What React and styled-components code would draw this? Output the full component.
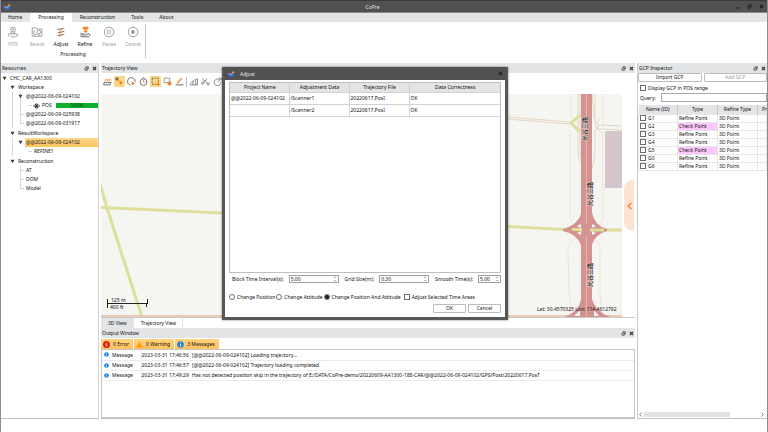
import React, { useState } from "react";
import styled, { createGlobalStyle, css } from "styled-components";

const GlobalStyle = createGlobalStyle`
  * {
    box-sizing: border-box;
  }
  body {
    margin: 0;
    background: #fff;
  }
  body, button, input, table {
    font-family: "Noto Sans", "Open Sans", "Noto Sans CJK SC", sans-serif;
    font-size: 5px;
    line-height: 8px;
    color: #111;
  }
`;

const Window = styled.div`
  position: relative;
  display: flex;
  flex-direction: column;
  min-height: 100vh;
  border: 1px solid #8c8c8c;
  border-top: 0;
  overflow: hidden;
`;
const TitleBar = styled.header`
  display: flex;
  align-items: center;
  height: 13px;
  padding: 0 3px 0 2px;
  background: #515151;
  border-top: 1px solid #3a3a3a;
  border-bottom: 1px solid #8a8a8a;
  color: #e4e4e4;
`;
const AppTitle = styled.h1`
  flex: 1;
  margin: 0;
  font-size: 5px;
  font-weight: 400;
  text-align: center;
`;
const WindowButtons = styled.div`
  display: flex;
  justify-content: flex-end;
  gap: 6px;
`;
const IconButton = styled.button`
  display: flex;
  align-items: center;
  justify-content: center;
  width: 6px;
  height: 8px;
  padding: 0;
  border: 0;
  background: none;
  color: ${(props) => props.$color || "#333"};
`;
const MenuTabs = styled.nav`
  display: flex;
  height: 9px;
  background: #e3e4e6;
`;
const MenuTab = styled.button`
  padding: 0 8px;
  border: 0;
  background: ${(props) => (props.$active ? "#fff" : "none")};
  line-height: 9px;
  &:first-child {
    padding-left: 7px;
  }
`;
const Ribbon = styled.div`
  display: flex;
  height: 41px;
  padding-top: 2px;
`;
const RibbonGroup = styled.section`
  height: 34px;
  border-right: 1px solid #c4c4c4;
`;
const RibbonItems = styled.div`
  display: flex;
`;
const RibbonButton = styled.button`
  display: flex;
  flex-direction: column;
  align-items: center;
  width: 24px;
  height: 26px;
  padding: 2px 0 0;
  border: 0;
  background: none;
  color: ${(props) => (props.disabled ? "#a0a0a0" : "#111")};
  svg {
    margin-bottom: 2px;
  }
`;
const GroupName = styled.div`
  text-align: center;
`;

const Workspace = styled.main`
  display: grid;
  grid-template-columns: 98px 1fr 130px;
  gap: 2px;
  flex: 1;
`;
const Panel = styled.section`
  display: flex;
  flex-direction: column;
  min-width: 0;
  border-bottom: 1px solid #c2c3c5;
  ${(props) =>
    props.$side === "left" &&
    css`
      border-right: 1px solid #cfd0d2;
    `}
  ${(props) =>
    props.$side === "right" &&
    css`
      border-left: 1px solid #c8c9cb;
    `}
`;
const PanelHeader = styled.div`
  display: flex;
  align-items: center;
  gap: 2px;
  flex: none;
  height: 10px;
  padding: 0 1px;
  background: #e3e4e6;
`;
const PanelTitle = styled.h2`
  flex: 1;
  margin: 0;
  font-size: 5px;
  font-weight: 400;
`;

const guide = "linear-gradient(#d8d8d8, #d8d8d8) no-repeat";
const Tree = styled.ul`
  margin: 0;
  padding: 0 0 0 8px;
  list-style: none;
  ${(props) =>
    props.$root &&
    css`
      padding: 1px 0 0 1px;
    `}
  ${(props) =>
    props.$groups &&
    css`
      display: flex;
      flex-direction: column;
      gap: 1px;
    `}
  ${(props) =>
    props.$guides === "outer" &&
    css`
      background: ${guide} 2px 0 / 1px 100%;
    `}
  ${(props) =>
    props.$guides === "inner" &&
    css`
      background: ${guide} 10px 0 / 1px calc(100% - 4px);
    `}
  ${(props) =>
    props.$guides === "both" &&
    css`
      background: ${guide} 2px 0 / 1px 100%,
        ${guide} 10px 0 / 1px calc(100% - 4px);
    `}
`;
const TreeRow = styled.div`
  display: flex;
  align-items: center;
  height: 9px;
  line-height: 9px;
  white-space: nowrap;
  > svg:first-child {
    margin-right: 2px;
  }
`;
const TreeLabel = styled.span`
  flex: 1;
  padding-left: 1px;
  background: ${(props) =>
    props.$selected ? "linear-gradient(#ffd98a, #fdc35f)" : "none"};
`;
const Branch = styled.span`
  width: 4px;
  height: 1px;
  margin: 0 1px 0 2px;
  background: #d4d4d4;
`;
const NodeName = styled.span`
  padding: 0 4px 0 2px;
`;
const Progress = styled.span`
  flex: 1;
  height: 5px;
  background: #0fae2b;
  color: #083d12;
  line-height: 5px;
  text-align: center;
`;

const ViewTools = styled.div`
  display: flex;
  align-items: center;
  gap: 1px;
  height: 21px;
  padding: 0 0 4px 1px;
  overflow: hidden;
`;
const ToolButton = styled.button`
  display: flex;
  align-items: center;
  justify-content: center;
  flex: none;
  width: 11px;
  height: 11px;
  padding: 0;
  border: 0;
  border-radius: 1px;
  background: ${(props) => (props.$active ? "#fed685" : "none")};
`;
const ToolDivider = styled.span`
  width: 1px;
  height: 10px;
  background: #bbb;
`;
const MapArea = styled.div`
  position: relative;
  display: flex;
  flex: 1;
  min-height: 200px;
  padding-right: 13px;
  border-bottom: 1px solid #c9c9c9;
`;
const MapCanvas = styled.svg`
  flex: 1;
  width: 0;
  min-width: 0;
  background: #f5f5f1;
`;
const DrawerHandle = styled.button`
  position: absolute;
  right: 1px;
  top: 86px;
  display: flex;
  align-items: center;
  justify-content: center;
  width: 10px;
  height: 51px;
  padding: 0;
  border: 0;
  border-radius: 9px 0 0 9px;
  background: #fde3d1;
`;
const ViewTabs = styled.div`
  display: flex;
  height: 10px;
`;
const ViewTab = styled.button`
  padding: 0 6px 0 7px;
  border: 0;
  border-right: 1px solid #e3e4e6;
  background: ${(props) => (props.$active ? "#fff" : "#e3e4e6")};
`;
const Filters = styled.div`
  display: flex;
  gap: 1px;
  padding-top: 1px;
`;
const FilterButton = styled.button`
  display: flex;
  align-items: center;
  gap: 3px;
  height: 10px;
  padding: 0 4px 0 2px;
  border: 0;
  background: linear-gradient(#ffd27c, #fec260);
`;
const LogBox = styled.div`
  height: 69px;
  border: 1px solid #c6c7c9;
`;
const LogTable = styled.table`
  width: 100%;
  border-collapse: collapse;
  table-layout: fixed;
  td {
    height: 10px;
    padding: 0;
    border-bottom: 1px solid #ececec;
    white-space: nowrap;
  }
  td:first-child {
    width: 39px;
    border-right: 1px solid #ececec;
  }
  td:nth-child(2) {
    width: 51px;
  }
`;
const LogKind = styled.span`
  display: flex;
  align-items: center;
  gap: 3px;
  padding-left: 2px;
`;

const ButtonPair = styled.div`
  display: grid;
  grid-template-columns: 1fr 1fr;
  gap: 2px;
`;
const PushButton = styled.button`
  min-width: 33px;
  height: 9px;
  padding: 0;
  border: 1px solid #bcbcbc;
  border-radius: 1px;
  background: #fff;
  line-height: 7px;
  color: ${(props) => (props.disabled ? "#a0a0a0" : "#111")};
`;
const CheckLabel = styled.label`
  display: flex;
  align-items: center;
  gap: 2px;
  white-space: nowrap;
`;
const Tick = styled.input`
  appearance: none;
  flex: none;
  width: 6px;
  height: 6px;
  margin: 0;
  border: 1px solid #6f6f6f;
  border-radius: ${(props) => (props.type === "radio" ? "50%" : "0")};
  background: #fff;
  &:checked {
    border-color: #777;
    background: #222;
  }
`;
const GcpOptions = styled.div`
  padding: 2px 0 1px 2px;
`;
const QueryRow = styled.div`
  display: flex;
  align-items: center;
  gap: 5px;
  padding-left: 2px;
`;
const QueryInput = styled.input`
  flex: 1;
  min-width: 0;
  height: 9px;
  padding: 0 2px;
  border: 1px solid #a9a9a9;
`;
const GcpScroll = styled.div`
  flex: 1;
  margin-top: 3px;
  overflow: hidden;
`;
const GcpTable = styled.table`
  width: 100%;
  border-collapse: collapse;
  table-layout: fixed;
  th {
    height: 9px;
    padding: 0;
    border-right: 1px solid #c9cacc;
    background: #e3e4e6;
    font-weight: 400;
  }
  th:nth-child(1) {
    width: 39px;
  }
  th:nth-child(2),
  th:nth-child(3) {
    width: 40px;
  }
  th:last-child {
    padding-left: 4px;
    border-right: 0;
    text-align: left;
  }
  td {
    height: 8px;
    padding: 0 0 0 1px;
    border: 1px solid #e6e6e6;
    line-height: 7px;
  }
`;
const TypeCell = styled.td`
  background: ${(props) => (props.$check ? "#fbc8fb" : "#fff")};
`;
const ScrollBar = styled.div`
  display: flex;
  align-items: center;
  gap: 1px;
  height: 7px;
  padding: 0 2px 0 0;
`;
const ScrollTrack = styled.div`
  flex: 1;
`;
const ScrollThumb = styled.div`
  width: 75%;
  height: 5px;
  background: #e2e3e5;
`;
const StatusBar = styled.footer`
  height: 13px;
`;

const Dialog = styled.section`
  position: absolute;
  left: 221px;
  top: 67px;
  width: 286px;
  border: 3px solid #575757;
  border-top: 0;
  background: #fff;
  box-shadow: 0 0 2px rgba(0, 0, 0, 0.5);
`;
const DialogHeader = styled.div`
  display: flex;
  align-items: center;
  gap: 5px;
  height: 13px;
  margin: 0 -1px;
  padding: 0 3px;
  background: #515151;
  color: #e4e4e4;
`;
const DialogBody = styled.form`
  padding: 2px 4px 4px;
`;
const AdjustBox = styled.div`
  min-height: 191px;
  border: 1px solid #bfbfbf;
`;
const AdjustTable = styled.table`
  width: 100%;
  border-collapse: collapse;
  table-layout: fixed;
  th,
  td {
    padding: 0 0 0 1px;
    border-right: 1px solid #d2d2d2;
    border-bottom: 1px solid #d2d2d2;
    text-align: left;
    font-weight: 400;
  }
  th {
    width: 60px;
    height: 9px;
    background: #e3e4e6;
    text-align: center;
  }
  th:first-child {
    width: 59px;
  }
  th:last-child {
    width: auto;
  }
  td {
    height: 12px;
  }
  th:last-child,
  td:last-child {
    border-right: 0;
  }
`;
const FieldRow = styled.div`
  display: flex;
  align-items: center;
  justify-content: space-between;
  margin-top: 2px;
  padding-left: 3px;
`;
const Field = styled.div`
  display: flex;
  align-items: center;
  gap: 5px;
`;
const SpinBox = styled.div`
  display: flex;
  align-items: center;
  width: ${(props) => props.$width}px;
  height: 8px;
  padding-right: 1px;
  border: 1px solid #a0a0a0;
`;
const SpinInput = styled.input`
  flex: 1;
  min-width: 0;
  height: 6px;
  padding: 0 0 0 1px;
  border: 0;
  outline: 0;
  line-height: 6px;
`;
const ModeRow = styled.div`
  display: flex;
  gap: 1px;
  margin-top: 10px;
  label:last-child {
    margin-left: 2px;
  }
`;
const DialogActions = styled.div`
  display: flex;
  justify-content: flex-end;
  gap: 2px;
  margin-top: 3px;
`;

const GREY = "#8f8f8f";
const DARK = "#555";
const ORANGE = "#f58220";

const Svg = ({ size = 8, box = 16, children }) => (
  <svg
    width={size}
    height={size}
    viewBox={`0 0 ${box} ${box}`}
    fill="none"
    aria-hidden="true"
  >
    {children}
  </svg>
);

const Logo = () => (
  <Svg size={8}>
    <path d="M1 6l5 1 4-2 4 2-2 6-7 1z" fill="#2f6fd0" />
    <path d="M3 9l3-2 2 3 4-3" stroke="#9cc9ff" strokeWidth="1.4" />
    <path d="M8 7l3-3V2h2v2h2v2h-3z" fill="#ff9220" />
    <path d="M1 5l3 3" stroke="#e44" strokeWidth="1.6" />
  </Svg>
);
const CloseIcon = () => (
  <Svg size={5} box={10}>
    <path d="M2 2l6 6M8 2L2 8" stroke="currentColor" strokeWidth="2.2" />
  </Svg>
);
const FloatIcon = () => (
  <Svg size={5} box={10}>
    <path d="M4 3V1.500h4.500V6H7" stroke="currentColor" strokeWidth="1.4" />
    <path d="M2 4h4.500v4.500H2z" stroke="currentColor" strokeWidth="1.4" />
  </Svg>
);
const MinimizeIcon = () => (
  <Svg size={5} box={10}>
    <path d="M2 8h6" stroke="currentColor" strokeWidth="2" />
  </Svg>
);
const ArrowDown = () => (
  <Svg size={5} box={10}>
    <path d="M1 1.500h8L5 8.500z" fill="#4a3a34" />
  </Svg>
);
const EyeIcon = () => (
  <svg width="7" height="6" viewBox="0 0 14 12" fill="none" aria-hidden="true">
    <path d="M1 6q6-8 12 0q-6 8-12 0z" stroke="#222" strokeWidth="1.8" />
    <circle cx="7" cy="6" r="2.6" fill="#222" />
  </svg>
);
const SpinArrows = () => (
  <svg width="4" height="6" viewBox="0 0 8 12" fill="none" aria-hidden="true">
    <path d="M1.5 4L4 1.5 6.5 4M1.5 8L4 10.500 6.500 8" stroke="#777" strokeWidth="1.3" />
  </svg>
);
const StatusIcon = ({ kind, size }) => (
  <Svg size={size}>
    {kind === "warning" && <path d="M8 1l8 14H0z" fill="#ff9c1a" />}
    {kind === "error" && (
      <>
        <circle cx="8" cy="8" r="8" fill="#e3170a" />
        <path d="M9 3L6 9h4l-3 4" stroke="#fff" strokeWidth="1.6" />
      </>
    )}
    {kind === "message" && (
      <>
        <circle cx="8" cy="8" r="7.500" fill="#1f83ea" />
        <path d="M8 3v2M8 7v6" stroke="#fff" strokeWidth="2" />
      </>
    )}
  </Svg>
);

const ribbonItems = [
  {
    label: "POS",
    disabled: true,
    icon: (
      <>
        <circle cx="10" cy="6" r="4" />
        <circle cx="10" cy="6" r="1" />
        <path d="M8 10l-2 4M12 10l1 4M4 17q-3 0-2-3 1-1 3-1h9q4 0 4 2t-4 3H6" />
      </>
    ),
  },
  {
    label: "Result",
    disabled: true,
    icon: (
      <>
        <path d="M2 17V3h6l2 2h8v12z" />
        <circle cx="13" cy="10" r="3" />
        <path d="M13 13v4M5 7v7M5 14h5" />
      </>
    ),
  },
  {
    label: "Adjust",
    icon: (
      <>
        <path d="M4 6l10-2M5 11l10-2M4 16l10-2" stroke={DARK} />
        <path d="M7 8l9-5M6 13l10-5M7 18l9-5" stroke={ORANGE} strokeWidth="1.2" />
      </>
    ),
  },
  {
    label: "Refine",
    icon: (
      <>
        <path d="M7 2h8v3H7z" fill={ORANGE} stroke={ORANGE} />
        <path d="M11 5v7M8 9h6" stroke={ORANGE} strokeWidth="2" />
        <path d="M2 13h7M13 13h4q3 3-1 5H4q-3-2 0-3h10" stroke={DARK} />
      </>
    ),
  },
  {
    label: "Pause",
    disabled: true,
    icon: (
      <>
        <circle cx="10" cy="10" r="8" />
        <path d="M8 6v8M12 6v8" />
      </>
    ),
  },
  {
    label: "Cancel",
    disabled: true,
    icon: (
      <>
        <circle cx="10" cy="10" r="8" />
        <path d="M8 8h4v4H8z" fill={GREY} />
      </>
    ),
  },
];

const viewTools = [
  {
    name: "Layers",
    icon: (
      <>
        <path d="M3 8q2-6 4-3M7 8q2-6 4-3M10 8q2-5 4-3" stroke={ORANGE} />
        <path d="M2 10h12l-2 4H1z" stroke={DARK} />
      </>
    ),
  },
  {
    name: "Link",
    active: true,
    icon: (
      <>
        <path d="M3 3l9 9" stroke={ORANGE} />
        <path d="M1 1h5v5H1z" fill="#664" />
        <path d="M8 7l6 2-5 5z" fill={ORANGE} />
      </>
    ),
  },
  {
    name: "Rotate",
    icon: (
      <>
        <path d="M6 14A6.500 6.500 0 1 1 14 9" stroke={DARK} />
        <path d="M8 8l6 3-5 4z" fill={ORANGE} />
      </>
    ),
  },
  {
    name: "Time",
    icon: (
      <>
        <circle cx="8" cy="9" r="6" stroke={DARK} />
        <path d="M6 1h4M8 5v4h3" stroke={ORANGE} />
      </>
    ),
  },
  {
    name: "Select area",
    active: true,
    icon: (
      <>
        <path d="M2 2h11v11H2z" stroke={DARK} strokeDasharray="3 2" />
        <path d="M10 13h6M13 10v6" stroke={ORANGE} />
      </>
    ),
  },
  {
    name: "Delete area",
    icon: (
      <>
        <path d="M2 2h10v8H2z" stroke="#888" />
        <path d="M9 9h5v5H9z" fill={ORANGE} stroke={ORANGE} />
      </>
    ),
  },
  {
    name: "Draw",
    icon: (
      <>
        <path d="M4 11l8-9" stroke={ORANGE} strokeWidth="2.5" />
        <path d="M1 14h14" stroke={DARK} />
      </>
    ),
  },
  {
    name: "Levels",
    divider: true,
    icon: <path d="M1 14h14V3l-3 3v8M2 12l5-5v7M7 8l5-5" stroke="#777" />,
  },
  {
    name: "Cut",
    icon: (
      <>
        <path d="M2 3l9 8M11 3L4 10" stroke="#777" />
        <circle cx="3" cy="11" r="2" stroke="#777" />
        <circle cx="13" cy="12" r="2" stroke="#777" />
      </>
    ),
  },
  {
    name: "Refresh",
    icon: <path d="M12 5a6 6 0 1 0 2 4M8 9l6-6M10 2h5v4" stroke="#777" />,
  },
];

const adjustRows = [
  ["@@2022-06-09-024102", "/Scanner1", "20220617.PosI", "OK"],
  ["", "/Scanner2", "20220617.PosI", "OK"],
];

const gcpRows = [
  ["G1", "Refine Point"],
  ["G2", "Check Point"],
  ["G3", "Refine Point"],
  ["G4", "Refine Point"],
  ["G5", "Check Point"],
  ["G0", "Refine Point"],
  ["G6", "Refine Point"],
];

const logRows = [
  ["2023-03-31 17:46:56", "[@@2022-06-09-024102] Loading trajectory..."],
  ["2023-03-31 17:46:57", "[@@2022-06-09-024102] Trajectory loading completed."],
  [
    "2023-03-31 17:49:29",
    "Has not detected position skip in the trajectory of E:/DATA/CoPre-demo/20220609-AA1300-188-CAR/@@2022-06-09-024102/GPS/Post/20220617.PosT",
  ],
];

const modes = ["Change Position", "Change Attitude", "Change Position And Attitude"];

function DockHeader({ title }) {
  return (
    <PanelHeader>
      <PanelTitle>{title}</PanelTitle>
      <IconButton type="button" aria-label={`Float ${title}`}>
        <FloatIcon />
      </IconButton>
      <IconButton type="button" aria-label={`Close ${title}`}>
        <CloseIcon />
      </IconButton>
    </PanelHeader>
  );
}

function TreeNode({ label, selected, leaf, children }) {
  return (
    <li>
      <TreeRow>
        {leaf ? <Branch /> : <ArrowDown />}
        <TreeLabel $selected={selected}>{label}</TreeLabel>
      </TreeRow>
      {children}
    </li>
  );
}

function Resources() {
  return (
    <Panel $side="left">
      <DockHeader title="Resources" />
      <Tree $root>
        <TreeNode label="CHC_CAR_AA1300">
          <Tree $groups>
            <TreeNode label="Workspace">
              <Tree $guides="both">
                <TreeNode label="@@2022-06-09-024102">
                  <Tree>
                    <li>
                      <TreeRow>
                        <Branch />
                        <EyeIcon />
                        <NodeName>POS</NodeName>
                        <Progress>100%</Progress>
                      </TreeRow>
                    </li>
                  </Tree>
                </TreeNode>
                <TreeNode leaf label="@@2022-06-09-025938" />
                <TreeNode leaf label="@@2022-06-09-031917" />
              </Tree>
            </TreeNode>
            <TreeNode label="ResultWorkspace">
              <Tree $guides="outer">
                <TreeNode label="@@2022-06-09-024102" selected>
                  <Tree>
                    <TreeNode leaf label="REFINE1" />
                  </Tree>
                </TreeNode>
              </Tree>
            </TreeNode>
            <TreeNode label="Reconstruction">
              <Tree $guides="inner">
                <TreeNode leaf label="AT" />
                <TreeNode leaf label="DOM" />
                <TreeNode leaf label="Model" />
              </Tree>
            </TreeNode>
          </Tree>
        </TreeNode>
      </Tree>
    </Panel>
  );
}

function RoadMap() {
  return (
    <MapCanvas viewBox="101 94 521 223" preserveAspectRatio="xMaxYMid slice">
      {/* side roads */}
      <g fill="none" stroke="#e3d6c4" strokeWidth="1">
        <path d="M500 116.500L570 122M500 118.500L570 124" />
        <path d="M598 125L622 126M598 129L622 130" />
        <path d="M578 94v55q0 12 4 15M580 94v55q0 10 3 14M595 94v28l4 4-4 4v20q0 12-4 22" />
        <path d="M592 94l3 30M600 118l-5 8 6 6" />
      </g>
      <g fill="none" stroke="#dfcbb5" strokeWidth="1" strokeDasharray="1 1.500">
        <path d="M571 94v25M570 130v85q1 8 4 9M603 94v32M603 132v85q-1 6-4 8" />
        <path d="M575 238q-7 4-7 14l1 40q2 12 1 22M594 238q6 4 6 14v40l2 22" />
      </g>
      <path d="M605 131h17v57h-17z" fill="#d5c6cd" />
      {/* secondary roads */}
      <g fill="none" stroke="#dde09a" strokeWidth="3">
        <path d="M99 180L107 208L142 317M101 207.500L223 213L500 226L574 230M588 230h34" />
        <path d="M580 115l-9 8 9 9" strokeWidth="3" />
      </g>
      <path d="M101 316h521" stroke="#e8cdb3" strokeWidth="2" />
      {/* trunk road */}
      <g fill="#d49290">
        <path d="M581 94h11v223h-11z" />
        <path d="M581 213q-2 11-18 16v2q14 3 18 14h11q3-11 15-14v-2q-12-3-15-16z" />
        <path d="M581 299q-2 13-17 18h46q-15-6-18-18z" />
      </g>
      <g fill="#f5f5f1">
        <path d="M577 226l4-2v4zM577 233l4 2v-4zM596 226l-4-2v4zM596 233l-4 2v-4z" />
        <path d="M574 316l6-6v6zM599 316l-5-6v6z" />
      </g>
      <path d="M572 229.500h10M590 230h14" stroke="#dde09a" strokeWidth="3" />
      <path d="M586.500 94v130M586.500 236v81" stroke="#e6b5b0" strokeWidth="1" />
      <g
        fontFamily="'Noto Sans CJK SC', sans-serif"
        fontSize="6"
        fontWeight="500"
        fill="#222"
        stroke="#ecd3d1"
        strokeWidth="1"
        paintOrder="stroke"
      >
        <text transform="translate(587 141) rotate(-90)">光谷三路</text>
        <text transform="translate(592 206) rotate(-90)">光谷三路</text>
        <text transform="translate(592 287) rotate(-90)">光谷三路</text>
      </g>
      <path d="M107.500 299v9M107.500 303.500h40M147.500 299v5M146.500 303v4" stroke="#222" />
      <g fontSize="5" fill="#111">
        <text x="111" y="302">125 m</text>
        <text x="110" y="309">400 ft</text>
        <text x="537" y="311">Lat: 30.4570325 Lon: 114.4612792</text>
      </g>
    </MapCanvas>
  );
}

function Trajectory() {
  return (
    <Panel>
      <DockHeader title="Trajectory View" />
      <ViewTools>
        {viewTools.map((tool) => (
          <React.Fragment key={tool.name}>
            {tool.divider && <ToolDivider />}
            <ToolButton type="button" aria-label={tool.name} $active={tool.active}>
              <Svg size={9}>
                <g strokeWidth="1.5">{tool.icon}</g>
              </Svg>
            </ToolButton>
          </React.Fragment>
        ))}
      </ViewTools>
      <MapArea>
        <RoadMap />
        <DrawerHandle type="button" aria-label="Open drawer">
          <svg width="5" height="8" viewBox="0 0 5 8" fill="none">
            <path d="M4.500 1L1 4l3.500 3" stroke={ORANGE} strokeWidth="1.2" />
          </svg>
        </DrawerHandle>
      </MapArea>
      <ViewTabs>
        <ViewTab type="button">3D View</ViewTab>
        <ViewTab type="button" $active>
          Trajectory View
        </ViewTab>
      </ViewTabs>
      <DockHeader title="Output Window" />
      <Filters>
        <FilterButton type="button">
          <StatusIcon kind="error" size={7} />0 Error
        </FilterButton>
        <FilterButton type="button">
          <StatusIcon kind="warning" size={7} />0 Warning
        </FilterButton>
        <FilterButton type="button">
          <StatusIcon kind="message" size={7} />3 Messages
        </FilterButton>
      </Filters>
      <LogBox>
        <LogTable>
          <tbody>
            {logRows.map(([time, text]) => (
              <tr key={time}>
                <td>
                  <LogKind>
                    <StatusIcon kind="message" size={5} />
                    Message
                  </LogKind>
                </td>
                <td>{time}</td>
                <td>{text}</td>
              </tr>
            ))}
          </tbody>
        </LogTable>
      </LogBox>
    </Panel>
  );
}

function GcpInspector() {
  const [query, setQuery] = useState("");
  return (
    <Panel $side="right">
      <DockHeader title="GCP Inspector" />
      <ButtonPair>
        <PushButton type="button">Import GCP</PushButton>
        <PushButton type="button" disabled>
          Add GCP
        </PushButton>
      </ButtonPair>
      <GcpOptions>
        <CheckLabel>
          <Tick type="checkbox" />
          Display GCP in POS range
        </CheckLabel>
      </GcpOptions>
      <QueryRow>
        <label htmlFor="query">Query:</label>
        <QueryInput
          id="query"
          value={query}
          onChange={(e) => setQuery(e.target.value)}
        />
      </QueryRow>
      <GcpScroll>
        <GcpTable>
          <thead>
            <tr>
              <th>Name (ID)</th>
              <th>Type</th>
              <th>Refine Type</th>
              <th>Pr</th>
            </tr>
          </thead>
          <tbody>
            {gcpRows.map(([id, type]) => (
              <tr key={id}>
                <td>
                  <CheckLabel>
                    <Tick type="checkbox" />
                    {id}
                  </CheckLabel>
                </td>
                <TypeCell $check={type === "Check Point"}>{type}</TypeCell>
                <td>3D Point</td>
                <td />
              </tr>
            ))}
          </tbody>
        </GcpTable>
      </GcpScroll>
      <ScrollBar>
        <Svg size={5} box={10}>
          <path d="M7 1L3 5l4 4" stroke="#666" strokeWidth="1.6" />
        </Svg>
        <ScrollTrack>
          <ScrollThumb />
        </ScrollTrack>
        <Svg size={5} box={10}>
          <path d="M3 1l4 4-4 4" stroke="#666" strokeWidth="1.6" />
        </Svg>
      </ScrollBar>
    </Panel>
  );
}

function SpinField({ id, label, initial, width }) {
  const [value, setValue] = useState(initial);
  return (
    <Field>
      <label htmlFor={id}>{label}</label>
      <SpinBox $width={width}>
        <SpinInput id={id} value={value} onChange={(e) => setValue(e.target.value)} />
        <SpinArrows />
      </SpinBox>
    </Field>
  );
}

function AdjustDialog() {
  const [mode, setMode] = useState(modes[2]);
  return (
    <Dialog role="dialog" aria-label="Adjust">
      <DialogHeader>
        <Logo />
        <PanelTitle>Adjust</PanelTitle>
        <IconButton type="button" aria-label="Close" $color="#222">
          <CloseIcon />
        </IconButton>
      </DialogHeader>
      <DialogBody onSubmit={(e) => e.preventDefault()}>
        <AdjustBox>
          <AdjustTable>
            <thead>
              <tr>
                <th>Project Name</th>
                <th>Adjustment Data</th>
                <th>Trajectory File</th>
                <th>Data Correctness</th>
              </tr>
            </thead>
            <tbody>
              {adjustRows.map((row) => (
                <tr key={row[1]}>
                  {row.map((cell, i) => (
                    <td key={i}>{cell}</td>
                  ))}
                </tr>
              ))}
            </tbody>
          </AdjustTable>
        </AdjustBox>
        <FieldRow>
          <SpinField id="block" label="Block Time Interval(s):" initial="5.00" width={50} />
          <SpinField id="grid" label="Grid Size(m):" initial="0.30" width={50} />
          <SpinField id="smooth" label="Smooth Time(s):" initial="5.00" width={23} />
        </FieldRow>
        <ModeRow>
          {modes.map((name) => (
            <CheckLabel key={name}>
              <Tick
                type="radio"
                name="mode"
                checked={mode === name}
                onChange={() => setMode(name)}
              />
              {name}
            </CheckLabel>
          ))}
          <CheckLabel>
            <Tick type="checkbox" />
            Adjust Selected Time Areas
          </CheckLabel>
        </ModeRow>
        <DialogActions>
          <PushButton type="submit">OK</PushButton>
          <PushButton type="button">Cancel</PushButton>
        </DialogActions>
      </DialogBody>
    </Dialog>
  );
}

function App() {
  const [tab, setTab] = useState("Processing");
  return (
    <>
      <GlobalStyle />
      <Window>
        <TitleBar>
          <Logo />
          <AppTitle>CoPre</AppTitle>
          <WindowButtons>
            <IconButton type="button" aria-label="Minimize" $color="#1c1c1c">
              <MinimizeIcon />
            </IconButton>
            <IconButton type="button" aria-label="Restore" $color="#1c1c1c">
              <FloatIcon />
            </IconButton>
            <IconButton type="button" aria-label="Close" $color="#1c1c1c">
              <CloseIcon />
            </IconButton>
          </WindowButtons>
        </TitleBar>
        <MenuTabs>
          {["Home", "Processing", "Reconstruction", "Tools", "About"].map((name) => (
            <MenuTab
              key={name}
              type="button"
              $active={tab === name}
              onClick={() => setTab(name)}
            >
              {name}
            </MenuTab>
          ))}
        </MenuTabs>
        <Ribbon>
          <RibbonGroup>
            <RibbonItems>
              {ribbonItems.map(({ label, disabled, icon }) => (
                <RibbonButton key={label} type="button" disabled={disabled}>
                  <Svg size={12} box={20}>
                    <g stroke={GREY} strokeWidth="1.4">
                      {icon}
                    </g>
                  </Svg>
                  {label}
                </RibbonButton>
              ))}
            </RibbonItems>
            <GroupName>Processing</GroupName>
          </RibbonGroup>
        </Ribbon>
        <Workspace>
          <Resources />
          <Trajectory />
          <GcpInspector />
        </Workspace>
        <StatusBar />
        <AdjustDialog />
      </Window>
    </>
  );
}

export default App;
